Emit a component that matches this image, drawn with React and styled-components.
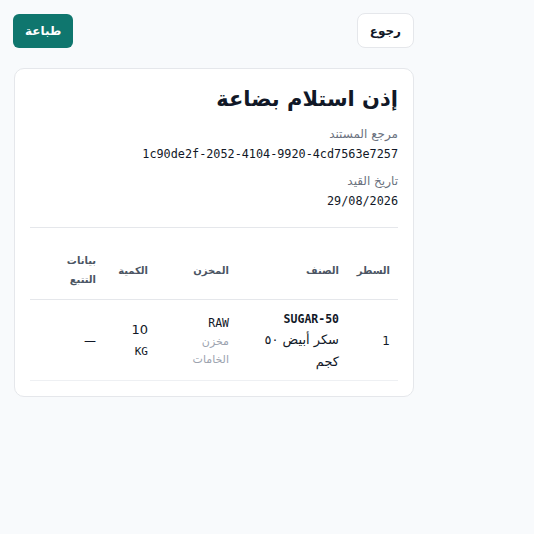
import styled, { createGlobalStyle } from "styled-components";

const GlobalStyle = createGlobalStyle`
    *, *::before, *::after {
        box-sizing: border-box;
    }
    html, body {
        margin: 0;
        padding: 0;
        background: #f8fafc;
    }
    body {
        font-family: "DejaVu Sans", "Noto Sans", sans-serif;
        color: #111827;
    }
`

const rows = [
    {
        line: 1,
        sku: "SUGAR-50",
        name: "سكر أبيض ٥٠ كجم",
        whCode: "RAW",
        whName: "مخزن الخامات",
        qty: "10",
        uom: "KG",
        tracking: "—",
    },
]

const App = () => {
    return (
        <Page dir="rtl">
            <GlobalStyle />
            <Toolbar>
                <BackButton>رجوع</BackButton>
                <PrintButton>طباعة</PrintButton>
            </Toolbar>

            <Card>
                <Title>إذن استلام بضاعة</Title>

                <Field>
                    <Label>مرجع المستند</Label>
                    <Mono>1c90de2f-2052-4104-9920-4cd7563e7257</Mono>
                </Field>
                <Field>
                    <Label>تاريخ القيد</Label>
                    <Mono>29/08/2026</Mono>
                </Field>

                <Divider />

                <Table>
                    <colgroup>
                        <col style={{ width: 51 }} />
                        <col style={{ width: 110 }} />
                        <col style={{ width: 81 }} />
                        <col style={{ width: 52 }} />
                        <col />
                    </colgroup>
                    <thead>
                        <tr>
                            <Th>السطر</Th>
                            <Th>الصنف</Th>
                            <Th>المخزن</Th>
                            <Th>الكمية</Th>
                            <Th>
                                <HeadWrap>بيانات التتبع</HeadWrap>
                            </Th>
                        </tr>
                    </thead>
                    <tbody>
                        {rows.map((r) => (
                            <tr key={r.line}>
                                <Td>{r.line}</Td>
                                <Td>
                                    <Sku>{r.sku}</Sku>
                                    <ItemName>{r.name}</ItemName>
                                </Td>
                                <Td>
                                    <WhCode>{r.whCode}</WhCode>
                                    <WhName>{r.whName}</WhName>
                                </Td>
                                <Td>
                                    <Qty>{r.qty}</Qty>
                                    <Uom>{r.uom}</Uom>
                                </Td>
                                <Td>{r.tracking}</Td>
                            </tr>
                        ))}
                    </tbody>
                </Table>
            </Card>
        </Page>
    )
}

const Page = styled.div`
    width: 428px;
    padding: 13px 14px;
    display: flex;
    flex-direction: column;
    gap: 20px;
`

const Toolbar = styled.div`
    display: flex;
    justify-content: space-between;
    align-items: center;
`

const BackButton = styled.button`
    height: 35px;
    padding: 0 12px;
    border: 1px solid #e5e7eb;
    border-radius: 8px;
    background: #ffffff;
    color: #111827;
    font-family: inherit;
    font-size: 12px;
    font-weight: 700;
`

const PrintButton = styled.button`
    height: 34px;
    padding: 0 12px;
    margin-left: -1px;
    border: none;
    border-radius: 6px;
    background: #0f766e;
    color: #ffffff;
    font-family: inherit;
    font-size: 12px;
    font-weight: 700;
`

const Card = styled.div`
    background: #ffffff;
    border: 1px solid #e5e7eb;
    border-radius: 10px;
    padding: 13px 15px 15px;
`

const Title = styled.h1`
    margin: 0 0 9px;
    font-size: 21px;
    font-weight: 700;
    line-height: 34px;
`

const Field = styled.div`
    & + & {
        margin-top: 8px;
    }
`

const Label = styled.div`
    font-size: 12px;
    color: #6b7280;
    line-height: 18px;
`

const Mono = styled.div`
    margin-top: 1px;
    font-family: "DejaVu Sans Mono", monospace;
    font-size: 11.8px;
    line-height: 20px;
    color: #111827;
`

const Divider = styled.hr`
    border: none;
    border-top: 1px solid #e5e7eb;
    margin: 16px 0 0;
`

const Table = styled.table`
    width: 100%;
    table-layout: fixed;
    border-collapse: collapse;
    margin-top: 13px;
`

const Th = styled.th`
    text-align: right;
    font-size: 10px;
    font-weight: 700;
    color: #4b5563;
    padding: 10px 8px;
    line-height: 19px;
    border-bottom: 1px solid #e5e7eb;
    vertical-align: middle;
`

const HeadWrap = styled.span`
    display: inline-block;
    max-width: 34px;
`

const Td = styled.td`
    text-align: right;
    font-size: 12px;
    padding: 9px 8px 7px;
    border-bottom: 1px solid #eef0f3;
    vertical-align: middle;
    color: #111827;
`

const Sku = styled.div`
    font-family: "DejaVu Sans Mono", monospace;
    font-weight: 700;
    font-size: 11.5px;
    line-height: 20px;
    direction: ltr;
    text-align: right;
`

const ItemName = styled.div`
    font-size: 13px;
    line-height: 22px;
`

const WhCode = styled.div`
    font-family: "DejaVu Sans Mono", monospace;
    font-size: 11.5px;
    line-height: 20px;
`

const WhName = styled.div`
    font-size: 11px;
    color: #9ca3af;
    line-height: 18px;
`

const Qty = styled.div`
    font-size: 13px;
    line-height: 22px;
`

const Uom = styled.div`
    font-family: "DejaVu Sans Mono", monospace;
    font-size: 11px;
    line-height: 22px;
`

export default App;
